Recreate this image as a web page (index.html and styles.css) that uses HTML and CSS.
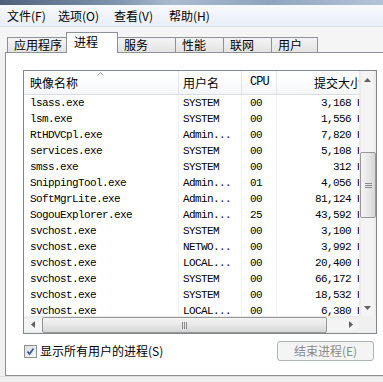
FILE: index.html
```html
<!DOCTYPE html>
<html lang="zh-CN">
  <head>
    <meta charset="UTF-8" />
    <title>Windows 任务管理器</title>
    <link rel="stylesheet" href="styles.css">
  </head>
  <body>
    <div class="titlebar"></div>

    <!-- Menu -->
    <div class="menubar">
      <span class="menu-item w1">文件(F)</span>
      <span class="menu-item w2">选项(O)</span>
      <span class="menu-item w3">查看(V)</span>
      <span class="menu-item">帮助(H)</span>
    </div>

    <!-- Tabs -->
    <div class="tabstrip">
      <div class="tab t1">应用程序</div>
      <div class="tab t2 active">进程</div>
      <div class="tab t3">服务</div>
      <div class="tab t4">性能</div>
      <div class="tab t5">联网</div>
      <div class="tab t6">用户</div>
    </div>

    <div class="panel">
      <div class="listbox">
        <div class="list-main">
          <div class="list-view">
            <div class="list-header">
              <div class="hcell name">映像名称
                <svg class="sort-arrow" width="7" height="4" viewBox="0 0 7 4"><polyline points="0.5,3.5 3.5,0.5 6.5,3.5" fill="none" stroke="#9aa3ae" stroke-width="1"/></svg>
              </div>
              <div class="hcell user">用户名</div>
              <div class="hcell cpu mono">CPU</div>
              <div class="hcell mem">提交大小</div>
            </div>
            <div class="list-rows mono" id="rows"></div>
          </div>
          <div class="vscroll">
            <div class="sbtn">
              <svg width="7" height="4" viewBox="0 0 7 4"><polygon points="0,4 3.5,0 7,4" fill="#606060"/></svg>
            </div>
            <div class="vtrack">
              <div class="vthumb">
                <svg width="7" height="7" viewBox="0 0 7 7"><path d="M0 1.5h7M0 3.5h7M0 5.5h7" stroke="#8a8a8a" stroke-width="1"/></svg>
              </div>
            </div>
            <div class="sbtn">
              <svg width="7" height="4" viewBox="0 0 7 4"><polygon points="0,0 7,0 3.5,4" fill="#606060"/></svg>
            </div>
          </div>
        </div>
        <div class="hscroll-row">
          <div class="hscroll">
            <div class="sbtn">
              <svg width="4" height="7" viewBox="0 0 4 7"><polygon points="4,0 4,7 0,3.5" fill="#606060"/></svg>
            </div>
            <div class="hthumb">
              <svg width="7" height="7" viewBox="0 0 7 7"><path d="M1.5 0v7M3.5 0v7M5.5 0v7" stroke="#8a8a8a" stroke-width="1"/></svg>
            </div>
            <div class="htrack"></div>
            <div class="sbtn">
              <svg width="4" height="7" viewBox="0 0 4 7"><polygon points="0,0 4,3.5 0,7" fill="#606060"/></svg>
            </div>
          </div>
          <div class="corner"></div>
        </div>
      </div>

      <div class="footer">
        <label class="check">
          <span class="box">
            <svg width="9" height="9" viewBox="0 0 9 9"><path d="M1.5 4.5 L3.5 7 L7.5 1.5" fill="none" stroke="#3d5a98" stroke-width="1.8"/></svg>
          </span>
          显示所有用户的进程(S)
        </label>
        <button class="end-btn" disabled>结束进程(E)</button>
      </div>
    </div>

    <div class="statusbar"></div>

    <script>
      // process list
      var procs = [
        ["lsass.exe", "SYSTEM", "00", "3,168"],
        ["lsm.exe", "SYSTEM", "00", "1,556"],
        ["RtHDVCpl.exe", "Admin...", "00", "7,820"],
        ["services.exe", "SYSTEM", "00", "5,108"],
        ["smss.exe", "SYSTEM", "00", "312"],
        ["SnippingTool.exe", "Admin...", "01", "4,056"],
        ["SoftMgrLite.exe", "Admin...", "00", "81,124"],
        ["SogouExplorer.exe", "Admin...", "25", "43,592"],
        ["svchost.exe", "SYSTEM", "00", "3,100"],
        ["svchost.exe", "NETWO...", "00", "3,992"],
        ["svchost.exe", "LOCAL...", "00", "20,400"],
        ["svchost.exe", "SYSTEM", "00", "66,172"],
        ["svchost.exe", "SYSTEM", "00", "18,532"],
        ["svchost.exe", "LOCAL...", "00", "6,380"]
      ];

      var rows = document.getElementById("rows");
      procs.forEach(function (p) {
        var row = document.createElement("div");
        row.className = "row";
        row.innerHTML =
          '<div class="cell name">' + p[0] + '</div>' +
          '<div class="cell user">' + p[1] + '</div>' +
          '<div class="cell cpu">' + p[2] + '</div>' +
          '<div class="cell mem">' + p[3] + ' K</div>';
        rows.appendChild(row);
      });
    </script>
  </body>
</html>
```

FILE: styles.css
```css
body {
  margin: 0;
  width: 383px;
  height: 382px;
  overflow: hidden;
  background-color: #f0f0f0;
  font-family: "Noto Sans CJK SC", "Noto Sans", sans-serif;
  font-size: 12px;
  color: #000;
}

.mono {
  font-family: "Liberation Mono", "Noto Sans CJK SC", monospace;
  font-size: 11px;
  letter-spacing: -0.6px;
}

.titlebar {
  height: 5px;
  background: linear-gradient(90deg, #4e617b, #7d93ae 30%, #a9bbd0 45%, #8ea4be 70%, #b4c5da);
}

/* Menu */
.menubar {
  height: 21px;
  display: flex;
  align-items: center;
  padding-left: 7px;
  background: linear-gradient(#f7f9fd, #e9eef7);
  border-bottom: 1px solid #d9e1ee;
}

.menu-item {
  line-height: 14px;
  white-space: nowrap;
}

.w1 { width: 51px; }
.w2 { width: 56px; }
.w3 { width: 55px; }

/* Tabs */
.tabstrip {
  height: 25px;
  display: flex;
  align-items: flex-end;
  padding-left: 7px;
  background-color: #f5f5f5;
}

.tab {
  box-sizing: border-box;
  height: 15px;
  padding-left: 6px;
  line-height: 14px;
  border: 1px solid #8e9199;
  border-bottom: none;
  margin-left: -1px;
  background: linear-gradient(#f4f4f4, #e3e3e3);
  white-space: nowrap;
}

.tab:first-child {
  margin-left: 0;
}

.tab.active {
  height: 21px;
  margin-bottom: -1px;
  padding-left: 7px;
  padding-top: 2px;
  background: #fff;
  position: relative;
  z-index: 1;
}

.t1 { width: 60px; }
.t2 { width: 52px; }
.t3 { width: 59px; }
.t4 { width: 49px; }
.t5 { width: 49px; }
.t6 { width: 47px; }

/* Panel */
.panel {
  box-sizing: border-box;
  height: 324px;
  margin-left: 5px;
  padding: 17px 5px 0 17px;
  background-color: #fff;
  border: 1px solid #8e9199;
  border-right: none;
}

.listbox {
  width: 354px;
  height: 264px;
  box-sizing: border-box;
  border: 1px solid #828790;
  display: flex;
  flex-direction: column;
}

.list-main {
  height: 245px;
  display: flex;
}

.list-view {
  flex: 1;
  overflow: hidden;
}

.list-header {
  display: grid;
  grid-template-columns: 155px 63px 35px 88px;
  height: 24px;
  box-sizing: border-box;
  background: linear-gradient(#ffffff, #fbfcfd 60%, #f3f5f8);
  border-bottom: 1px solid #d8dee8;
}

.hcell {
  box-sizing: border-box;
  border-right: 1px solid #e2e5ea;
  line-height: 23px;
  white-space: nowrap;
  position: relative;
}

.hcell.name { padding-left: 6px; }
.hcell.user { padding-left: 4px; }
.hcell.cpu { padding-left: 8px; font-size: 12px; letter-spacing: -1px; }
.hcell.mem { text-align: right; padding-right: 3px; border-right: none; }

.sort-arrow {
  position: absolute;
  left: 73px;
  top: 1px;
}

.list-rows {
  width: 341px;
}

.row {
  display: grid;
  grid-template-columns: 155px 63px 35px 88px;
  height: 16px;
  line-height: 16px;
}

.cell {
  box-sizing: border-box;
  white-space: nowrap;
  overflow: hidden;
  border-right: 1px solid #f1f2f4;
}

.cell.name { padding-left: 6px; }
.cell.user { padding-left: 4px; }
.cell.cpu { padding-left: 8px; }
.cell.mem { text-align: right; padding-right: 2px; border-right: none; }

/* Scrollbars */
.vscroll {
  width: 17px;
  display: flex;
  flex-direction: column;
  background: linear-gradient(90deg, #e8e8e8, #f4f4f4 20%, #f4f4f4 80%, #e8e8e8);
}

.sbtn {
  width: 17px;
  height: 17px;
  display: flex;
  align-items: center;
  justify-content: center;
  flex-shrink: 0;
}

.vtrack {
  flex: 1;
  padding-top: 64px;
}

.vthumb {
  box-sizing: border-box;
  width: 16px;
  height: 66px;
  margin-left: 1px;
  border: 1px solid #979797;
  border-radius: 2px;
  background: linear-gradient(90deg, #f4f4f4, #e8e8e8 50%, #d6d6d6);
  display: flex;
  align-items: center;
  justify-content: center;
}

.hscroll-row {
  height: 17px;
  display: flex;
}

.hscroll {
  flex: 1;
  display: flex;
  background: linear-gradient(#e8e8e8, #f4f4f4 20%, #f4f4f4 80%, #e8e8e8);
}

.hthumb {
  box-sizing: border-box;
  width: 285px;
  height: 16px;
  margin-left: 1px;
  margin-top: 1px;
  border: 1px solid #979797;
  border-radius: 2px;
  background: linear-gradient(#f4f4f4, #e8e8e8 50%, #d6d6d6);
  display: flex;
  align-items: center;
  justify-content: center;
}

.htrack {
  flex: 1;
}

.corner {
  width: 17px;
  background-color: #f0f0f0;
}

/* Footer */
.footer {
  margin-top: 7px;
  height: 20px;
  display: flex;
  align-items: center;
  justify-content: space-between;
  padding-left: 1px;
}

.check {
  display: flex;
  align-items: center;
  gap: 3px;
  line-height: 14px;
}

.box {
  box-sizing: border-box;
  width: 13px;
  height: 13px;
  border: 1px solid #8f8f8f;
  background: linear-gradient(135deg, #dcdcdc, #f8f8f8);
  display: flex;
  align-items: center;
  justify-content: center;
}

.end-btn {
  width: 97px;
  height: 20px;
  margin-right: 4px;
  padding: 0;
  font-family: inherit;
  font-size: 12px;
  line-height: 14px;
  color: #8a8a8a;
  background: #f4f4f4;
  border: 1px solid #adb2b5;
  border-radius: 3px;
}

.statusbar {
  height: 6px;
  border-top: 1px solid #dcdcdc;
  background-color: #f0f0f0;
}
```
